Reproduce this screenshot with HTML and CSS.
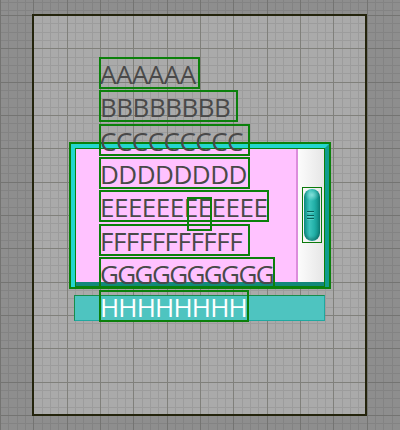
FILE: index.html
```html
<!DOCTYPE html>
<html>
<head>
<meta charset="utf-8">
<link rel="stylesheet" href="styles.css">
</head>
<body>
<div class="panel">
  <div class="cluster">
    <div class="cluster-inner">
      <div class="list-row">
        <div class="list-body"></div>
        <div class="scroll">
          <div class="thumb-box">
            <div class="thumb">
              <span class="grip"></span>
              <span class="grip"></span>
              <span class="grip"></span>
            </div>
          </div>
        </div>
      </div>
    </div>
  </div>
  <div class="teal-bar"></div>
  <div class="stack">
    <div class="label w-a">AAAAAA</div>
    <div class="label w-b">BBBBBBBB</div>
    <div class="label w-c">CCCCCCCCC</div>
    <div class="label w-d">DDDDDDDD</div>
    <div class="label w-e">EEEEEEEEEEEE<span class="mini-box"></span></div>
    <div class="label w-f">FFFFFFFFFFF</div>
    <div class="label w-g tight">GGGGGGGGGG</div>
    <div class="label w-h light">HHHHHHHH</div>
  </div>
</div>
</body>
</html>
```
FILE: styles.css
```css
html, body {
  margin: 0;
  padding: 0;
}
body {
  width: 400px;
  height: 430px;
  overflow: hidden;
  background-color: #8e8e8e;
  background-image:
    repeating-linear-gradient(to right, #747472 0 1px, transparent 1px 33.3333px),
    repeating-linear-gradient(to bottom, #747472 0 1px, transparent 1px 33.3333px),
    repeating-linear-gradient(to right, #838383 0 1px, transparent 1px 8.3333px),
    repeating-linear-gradient(to bottom, #838383 0 1px, transparent 1px 8.3333px);
  background-position: 0 15px;
  font-family: "Open Sans", "Noto Sans", sans-serif;
}
.panel {
  position: relative;
  box-sizing: border-box;
  margin: 14px 0 0 32px;
  width: 335px;
  height: 402px;
  border: 2px solid #24240c;
  background-color: #aaaaaa;
  background-image:
    repeating-linear-gradient(to right, #80807b 0 1px, transparent 1px 33.3333px),
    repeating-linear-gradient(to bottom, #80807b 0 1px, transparent 1px 33.3333px),
    repeating-linear-gradient(to right, #9c9c9c 0 1px, transparent 1px 8.3333px),
    repeating-linear-gradient(to bottom, #9c9c9c 0 1px, transparent 1px 8.3333px);
  background-origin: border-box;
  background-position: 1.3333px 1px;
}
.stack {
  display: flex;
  flex-direction: column;
  align-items: flex-start;
  gap: 1.3333px;
  padding: 41px 0 0 65px;
}
.label {
  position: relative;
  box-sizing: border-box;
  height: 32px;
  border: 2px solid #0b800b;
  padding: 1px 0 0 0;
  text-indent: -1px;
  font-size: 26px;
  line-height: 28px;
  letter-spacing: -0.5px;
  color: #494949;
  white-space: nowrap;
}
.light { color: #ffffff; letter-spacing: -0.8px; }
.tight { letter-spacing: -1.6px; }
.w-a { width: 101px; }
.w-b { width: 139px; }
.w-c { width: 151px; }
.w-d { width: 151px; }
.w-e { width: 170px; }
.w-f { width: 151px; }
.w-g { width: 176px; }
.w-h { width: 150px; }
.mini-box {
  position: absolute;
  left: 86px;
  top: 5px;
  width: 25px;
  height: 34px;
  box-sizing: border-box;
  border: 2px solid #0b800b;
}
.cluster {
  position: absolute;
  left: 37px;
  top: 128px;
  box-sizing: border-box;
  width: 258px;
  height: 143px;
  border-style: solid;
  border-width: 4px 4px 0 4px;
  border-color: #22d6ce #0f9c8d #0f8676 #22d6ce;
  box-shadow: 0 0 0 2px #0b800b;
}
.cluster-inner {
  box-sizing: border-box;
  height: 100%;
  border: 1px solid #0b800b;
  padding-bottom: 4px;
  background: #12887a;
}
.list-row {
  display: flex;
  height: 100%;
}
.list-body {
  flex: 1;
  background: #ffc2ff;
  border-right: 2px solid #dc8cdc;
}
.scroll {
  width: 26px;
  box-sizing: border-box;
  padding: 38px 0 0 4px;
  background: linear-gradient(to right, #fcfcfc, #e6e6e6);
}
.thumb-box {
  box-sizing: border-box;
  width: 20px;
  height: 56px;
  border: 1px solid #0b7a0b;
  padding: 1px;
}
.thumb {
  height: 100%;
  border-radius: 8px;
  background:
    radial-gradient(ellipse 7px 6px at 50% 6px, rgba(200,255,250,0.55), rgba(200,255,250,0) 100%),
    linear-gradient(to right, #0f9088, #3cc4bc 35%, #22b0a8 65%, #0c847c);
  box-shadow: inset 0 -3px 3px rgba(0,60,55,0.35);
  display: flex;
  flex-direction: column;
  justify-content: center;
  gap: 2.6px;
  padding-left: 3px;
}
.grip {
  display: block;
  width: 7px;
  height: 1px;
  background: #0a5d56;
  box-shadow: 0 1px 0 rgba(150,240,230,0.35);
}
.teal-bar {
  position: absolute;
  left: 40px;
  top: 279px;
  box-sizing: border-box;
  width: 251px;
  height: 26px;
  background: #4ec4c0;
  border: 1px solid #20a8a0;
  border-left-color: #178c4c;
  border-top-color: #178c4c;
}
```
